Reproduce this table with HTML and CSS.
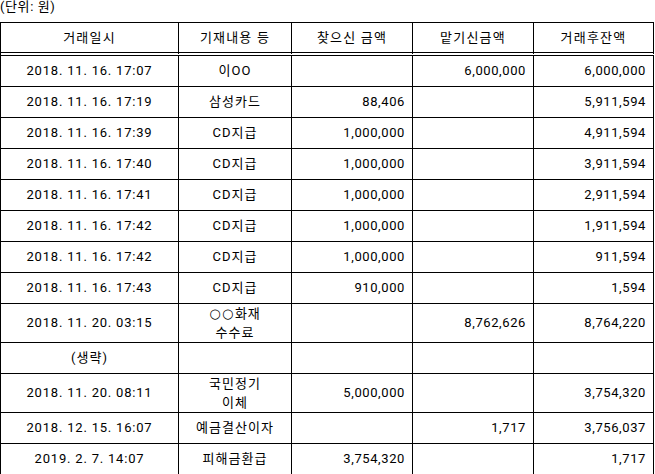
FILE: index.html
```html
<!DOCTYPE html>
<html lang="ko">
<head>
<meta charset="utf-8">
<title>거래내역</title>
<link rel="stylesheet" href="styles.css">
</head>
<body>
<div class="unit">(단위: 원)</div>
<table class="ledger">
  <thead>
    <tr>
      <th class="c1">거래일시</th>
      <th class="c2">기재내용 등</th>
      <th class="c3">찾으신 금액</th>
      <th class="c4">맡기신금액</th>
      <th class="c5">거래후잔액</th>
    </tr>
  </thead>
  <tbody>
    <tr><td class="date">2018. 11. 16. 17:07</td><td class="desc">이OO</td><td class="num"></td><td class="num">6,000,000</td><td class="num">6,000,000</td></tr>
    <tr><td class="date">2018. 11. 16. 17:19</td><td class="desc">삼성카드</td><td class="num">88,406</td><td class="num"></td><td class="num">5,911,594</td></tr>
    <tr><td class="date">2018. 11. 16. 17:39</td><td class="desc">CD지급</td><td class="num">1,000,000</td><td class="num"></td><td class="num">4,911,594</td></tr>
    <tr><td class="date">2018. 11. 16. 17:40</td><td class="desc">CD지급</td><td class="num">1,000,000</td><td class="num"></td><td class="num">3,911,594</td></tr>
    <tr><td class="date">2018. 11. 16. 17:41</td><td class="desc">CD지급</td><td class="num">1,000,000</td><td class="num"></td><td class="num">2,911,594</td></tr>
    <tr><td class="date">2018. 11. 16. 17:42</td><td class="desc">CD지급</td><td class="num">1,000,000</td><td class="num"></td><td class="num">1,911,594</td></tr>
    <tr><td class="date">2018. 11. 16. 17:42</td><td class="desc">CD지급</td><td class="num">1,000,000</td><td class="num"></td><td class="num">911,594</td></tr>
    <tr><td class="date">2018. 11. 16. 17:43</td><td class="desc">CD지급</td><td class="num">910,000</td><td class="num"></td><td class="num">1,594</td></tr>
    <tr class="tall"><td class="date">2018. 11. 20. 03:15</td><td class="desc two"><span class="circ">○○</span>화재<br>수수료</td><td class="num"></td><td class="num">8,762,626</td><td class="num">8,764,220</td></tr>
    <tr><td class="date kr">(생략)</td><td class="desc"></td><td class="num"></td><td class="num"></td><td class="num"></td></tr>
    <tr class="tall tall2"><td class="date">2018. 11. 20. 08:11</td><td class="desc two">국민정기<br>이체</td><td class="num">5,000,000</td><td class="num"></td><td class="num">3,754,320</td></tr>
    <tr><td class="date">2018. 12. 15. 16:07</td><td class="desc">예금결산이자</td><td class="num"></td><td class="num">1,717</td><td class="num">3,756,037</td></tr>
    <tr><td class="date">2019. 2. 7. 14:07</td><td class="desc">피해금환급</td><td class="num">3,754,320</td><td class="num"></td><td class="num">1,717</td></tr>
  </tbody>
</table>
</body>
</html>
```

FILE: styles.css
```css
html, body {
  margin: 0;
  padding: 0;
  background: #ffffff;
}

body {
  font-family: Roboto, "Noto Sans CJK KR", sans-serif;
  font-size: 13px;
  color: #000000;
}

.unit {
  height: 14px;
  line-height: 14px;
  margin-bottom: 8px;
  letter-spacing: 0.6px;
}

.ledger {
  width: 654px;
  table-layout: fixed;
  border-collapse: separate;
  border-spacing: 0;
  border-top: 1px solid #000;
  border-left: 1px solid #000;
}

.ledger th,
.ledger td {
  box-sizing: border-box;
  border-right: 1px solid #000;
  border-bottom: 1px solid #000;
  padding: 0;
  height: 31px;
  line-height: 16px;
  vertical-align: middle;
  font-weight: normal;
  white-space: nowrap;
  overflow: hidden;
}

.ledger th {
  height: 33px;
  border-bottom: 4px double #000;
  text-align: center;
  padding-top: 1px;
  letter-spacing: 1.2px;
}

.c1 { width: 178px; }
.c2 { width: 113px; }
.c3 { width: 121px; }
.c4 { width: 121px; }
.c5 { width: 120px; }

.ledger .date {
  text-align: center;
  letter-spacing: 0.8px;
}

.ledger .date.kr {
  letter-spacing: 1px;
}

.ledger .desc {
  text-align: center;
  letter-spacing: 1px;
}

.ledger .num {
  text-align: right;
  padding-right: 7px;
  letter-spacing: 0.6px;
}

.ledger .tall td {
  height: 38px;
}

.ledger .tall2 td {
  height: 39px;
}

.ledger .two {
  line-height: 19px;
}

.circ {
  font-family: "DejaVu Sans", sans-serif;
  font-size: 13px;
  letter-spacing: 1.5px;
}
```
